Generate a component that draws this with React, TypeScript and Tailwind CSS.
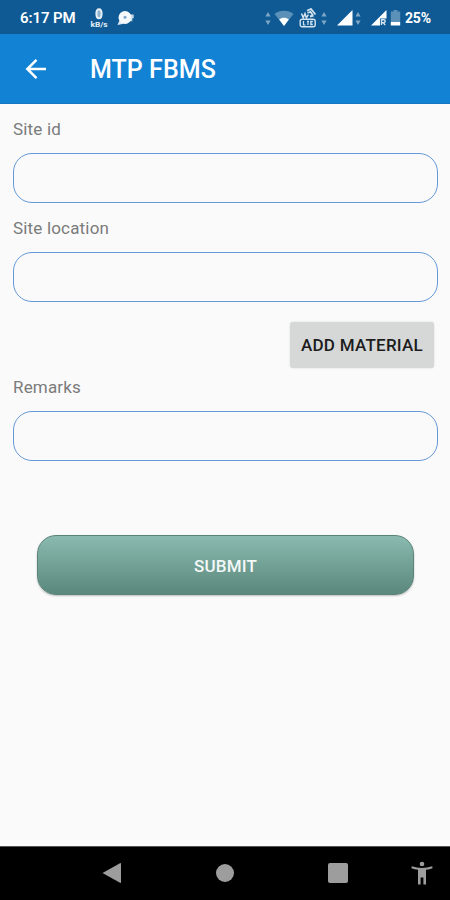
import React from 'react';

const UpDown = ({ className }: { className: string }) => (
  <svg viewBox="0 0 6 15" className={`h-[15px] w-[6px] ${className}`}>
    <path d="M3 1l2.600 4.600H.4zM3 14L.4 9.400h5.200z" fill="#7fa6c5" />
  </svg>
);

const SpeedIcon = () => (
  <svg viewBox="0 0 18 20" className="ml-[13px] h-5 w-[18px]">
    <ellipse cx="9" cy="5.800" rx="2.600" ry="4.500" fill="#8fb2cf" stroke="#e6eff7" strokeWidth="2" />
    <text
      x="9"
      y="18.500"
      textAnchor="middle"
      textLength="17"
      lengthAdjust="spacingAndGlyphs"
      fill="#e6eff7"
      className="font-['Roboto'] text-[8px] font-bold"
    >
      kB/s
    </text>
  </svg>
);

const DiscIcon = () => (
  <svg viewBox="0 0 18 18" className="ml-[9px] h-[18px] w-[18px]">
    <path d="M11 5.500h5.700v3.700h-1.400v3H11z" fill="#c4d8e8" />
    <path d="M2.500 11.500L.5 16l6-1.200z" fill="#dfeaf4" />
    <circle cx="8" cy="8.500" r="6.500" fill="#f5f9fc" />
    <circle cx="8" cy="8.200" r="1.500" fill="#7da6c8" />
  </svg>
);

const WifiIcon = () => (
  <svg viewBox="0 0 20 16" className="ml-[3px] h-4 w-5">
    <path d="M10 16L.5 4C6-.3 14-.3 19.500 4z" fill="#5b91b9" />
    <path d="M10 16L5.200 9.500c2.600-2.400 7-2.400 9.600 0z" fill="#fff" />
  </svg>
);

const VolteIcon = () => (
  <svg viewBox="0 0 18 20" className="ml-[5px] h-5 w-[18px]">
    <g fill="none" stroke="#d3e3ef">
      <path d="M2.500 5.500l1.700 4.200 1.800-4.200 1.400 4.200 2-3" strokeWidth="1.500" />
      <path d="M8 2.700l4-1.800 4.500 5.600M8.500 5l3-1.200 2.300 3.400" strokeWidth="1.700" />
      <path d="M11 8.500l3.500-1" strokeWidth="2" />
      <rect x="1.200" y="11.200" width="15" height="7.600" rx="2" strokeWidth="1.400" />
      <path d="M4.500 13v4h2M9 13v4M8 13.400h2M13.800 13.400h-2v3.200h2M12 15h1.500" strokeWidth="1.200" />
    </g>
  </svg>
);

const SignalIcon = ({ roaming, className }: { roaming?: boolean; className: string }) => (
  <svg viewBox="0 0 16 16" className={`h-4 w-4 ${className}`}>
    <path d="M0 15.500L15.500 0v15.500z" fill="#fff" />
    {roaming && (
      <>
        <path d="M9 8.500h7V16H9z" fill="#0f5a94" />
        <path d="M10.500 15V9.800h2.200a1.500 1.500 0 010 3h-2M12.500 12.800l1.700 2.300" fill="none" stroke="#d3e3ef" strokeWidth="1.400" />
      </>
    )}
  </svg>
);

const BatteryIcon = () => (
  <svg viewBox="0 0 11 16" className="ml-[3px] h-4 w-[11px]">
    <path d="M3.500 0h4v1.500h2.700V12H.8V1.500h2.700z" fill="#5b91b9" />
    <path d="M.8 12h9.400v3.500H.8z" fill="#fff" />
  </svg>
);

const StatusBar = () => (
  <div className="flex h-[34px] items-center bg-[#0f5a94] pt-[2px] pr-[18px] pl-[20px] text-white">
    <span className="w-[57px] text-[15px] font-semibold tracking-[-0.1px] whitespace-nowrap">6:17 PM</span>
    <SpeedIcon />
    <DiscIcon />
    <div className="ml-auto flex items-center">
      <UpDown className="" />
      <WifiIcon />
      <VolteIcon />
      <UpDown className="ml-[4px]" />
      <SignalIcon className="ml-[10px]" />
      <UpDown className="ml-[2px]" />
      <SignalIcon roaming className="ml-[10px]" />
      <BatteryIcon />
      <span className="ml-[4px] w-[27px] text-[14px] font-bold tracking-[-0.2px] whitespace-nowrap">25%</span>
    </div>
  </div>
);

const Field = ({ id, label }: { id: string; label: string }) => (
  <div>
    <label htmlFor={id} className="block h-[24px] text-[17px] leading-[24px] tracking-[0.18px] text-[#7b7b7b]">
      {label}
    </label>
    <input
      id={id}
      type="text"
      className="mt-[12px] block h-[50px] w-full rounded-[19px] border border-[#6699d8] bg-transparent px-4 outline-none"
    />
  </div>
);

export default function App() {
  return (
    <div className="flex h-[900px] w-[450px] flex-col overflow-hidden bg-[#fafafa] font-['Roboto',sans-serif]">
      <StatusBar />
      <header className="flex h-[70px] items-center border-b border-[#1677c0] bg-[#1282d5] pl-[25px] text-white">
        <svg viewBox="0 0 22 22" className="h-[22px] w-[22px]">
          <path d="M21 11H2.500M11.500 1.800L2.300 11l9.200 9.200" fill="none" stroke="#fff" strokeWidth="2.500" />
        </svg>
        <h1 className="ml-[43px] pt-[3px] text-[25px] font-medium tracking-[0.05px]">MTP FBMS</h1>
      </header>

      <main className="flex flex-1 flex-col pt-[13px] pr-[12px] pl-[13px]">
        <Field id="site-id" label="Site id" />
        <div className="mt-[13px]">
          <Field id="site-location" label="Site location" />
        </div>
        <button className="mt-[20px] mr-[4px] h-[46px] w-[144px] self-end rounded-[3px] bg-[#d6d8d7] pt-[2px] text-[17px] font-medium tracking-[0.25px] whitespace-nowrap text-[#1c1c1c] shadow-[0_0_2px_rgba(0,0,0,0.15)]">
          ADD MATERIAL
        </button>
        <div className="mt-[7px]">
          <Field id="remarks" label="Remarks" />
        </div>
        <button className="mx-[24px] mt-[74px] h-[60px] rounded-[19px] border border-[#5b8478] bg-linear-to-b from-[#8abab0] to-[#5b887c] pt-[3px] text-[17px] font-medium tracking-[0.15px] text-[#f4f8f7] shadow-[0_1px_2px_rgba(0,0,0,0.25)]">
          SUBMIT
        </button>
      </main>

      <nav className="flex h-[54px] items-center border-t border-[#555] bg-black pb-[2px] pl-[101px] text-[#9d9d9d]">
        <svg viewBox="0 0 21 22" className="h-[22px] w-[21px] fill-current">
          <path d="M1.500 11L19 1.200q1-.5 1 .6v18.400q0 1.100-1 .6z" />
        </svg>
        <div className="ml-[94px] h-[18px] w-[18px] rounded-full bg-[#9d9d9d]" />
        <div className="ml-[94px] h-[20px] w-[20px] rounded-[2px] bg-[#9d9d9d]" />
        <svg viewBox="0 0 22 24" className="ml-[63px] h-6 w-[22px] fill-current">
          <circle cx="11" cy="3" r="2.300" />
          <path d="M.8 5.300Q11 8.700 21.200 5.300l.4 2q-3.200 1.200-6.600 1.400V23.500h-2.600v-7H9.600v7H7V8.700Q3.600 8.500.4 7.300z" />
        </svg>
      </nav>
    </div>
  );
}
